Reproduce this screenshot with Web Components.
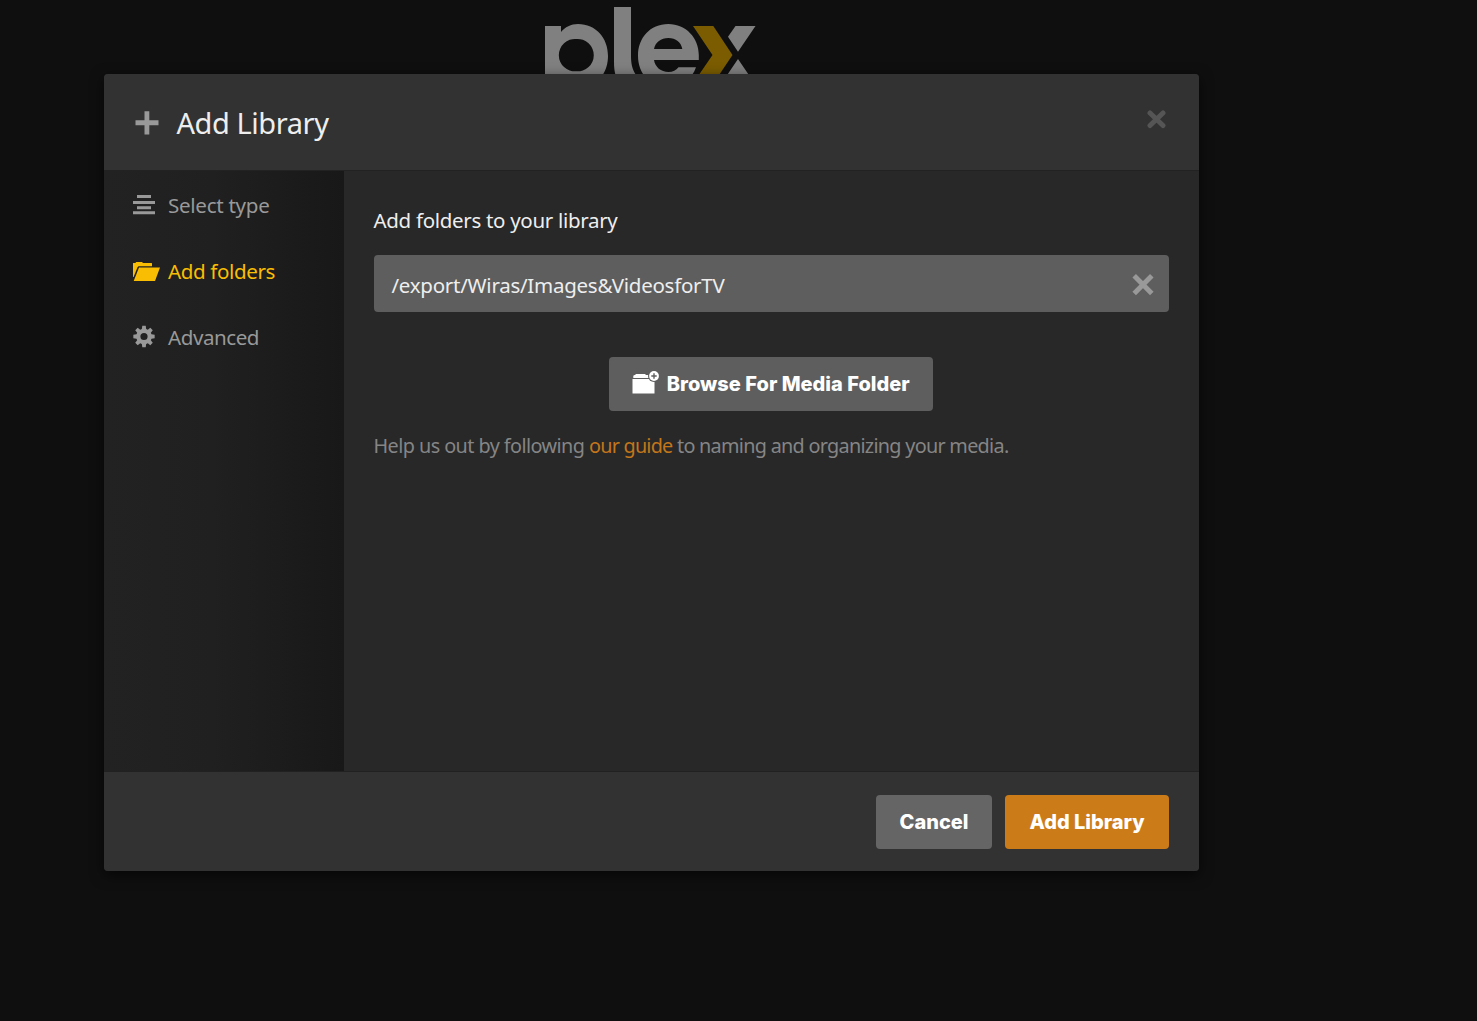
<!DOCTYPE html>
<html lang="en">
<head>
<meta charset="utf-8">
<title>Plex</title>
<style>
html,body{margin:0;height:100%;background:#0f0f0f;overflow:hidden}
body{font-family:"Noto Sans","Open Sans",sans-serif;color:#eee}
</style>
</head>
<body>
<plex-stage>
  <plex-logo slot="brand"></plex-logo>
  <modal-dialog>
    <modal-header slot="header"><fit-text width="152">Add Library</fit-text></modal-header>
    <step-nav slot="nav">
      <step-item icon="list"><fit-text width="101.5">Select type</fit-text></step-item>
      <step-item icon="folder" active><fit-text width="107">Add folders</fit-text></step-item>
      <step-item icon="gear"><fit-text width="91">Advanced</fit-text></step-item>
    </step-nav>
    <folder-panel></folder-panel>
    <plex-button slot="footer" style="width:116px"><fit-text width="69">Cancel</fit-text></plex-button>
    <plex-button slot="footer" primary style="width:164px"><fit-text width="115">Add Library</fit-text></plex-button>
  </modal-dialog>
</plex-stage>
<script>
const define = (name, html, ready) => {
  const t = document.createElement('template');
  t.innerHTML = html;
  customElements.define(name, class extends HTMLElement {
    constructor() {
      super();
      this.attachShadow({mode: 'open'}).append(t.content.cloneNode(true));
    }
    connectedCallback() { if (ready) ready.call(this, this.shadowRoot); }
  });
};

define('plex-stage', `<style>
:host{display:grid;width:1303px;height:1021px;justify-items:center;align-items:start}
.brand,.content{grid-area:1/1}
.brand{margin:7px 3px 0 0}
.content{margin-top:74px;z-index:1}
</style><div class="brand"><slot name="brand"></slot></div><div class="content"><slot></slot></div>`);

define('plex-logo', `<style>:host{display:block}svg{display:block}</style>
<svg width="212" height="80" viewBox="544 7 212 80">
<path fill="#808080" fill-rule="evenodd" d="M545 26H561V32C565 27 571 24 578 24C596 24 608 38 608 56C608 74 596 88 579 88H545ZM576.3 39A16.2 16.2 0 1 0 576.3 71.3A16.2 16.2 0 1 0 576.3 39Z"/>
<path fill="#808080" d="M614 7H631V56C631 63 632 69 636 75V87H622C616 79 614 73 614 62Z"/>
<path fill="#808080" fill-rule="evenodd" d="M668.3 24C686 24 698.8 38 698.8 55V60H654C655 67 661 72 668.5 72C673 72 676 70.5 678.5 67.3H696C692 79 682 87 668 87C650 87 638 74 638 55.5C638 38 650 24 668.3 24ZM654 49H682.3C681 42 676 38 668.3 38C661 38 655.5 42 654 49Z"/>
<path fill="#7b5c00" d="M693 26H713.3L732.5 55L711 87H690.6L712.5 55Z"/>
<path fill="#808080" d="M735.5 26H755.5L738 51.8L728 36.8ZM738 59L757 87H719Z"/>
</svg>`);

/* Tracks its text so the rendered line has the given width. */
define('fit-text', `<style>:host{display:inline-block;white-space:pre}</style><span><slot></slot></span>`, function (root) {
  const span = root.querySelector('span');
  const fit = () => {
    span.style.letterSpacing = '0px';
    const n = this.textContent.length, w = span.getBoundingClientRect().width;
    span.style.letterSpacing = ((+this.getAttribute('width') - w) / n) + 'px';
  };
  requestAnimationFrame(fit);
  document.fonts.ready.then(fit);
});

define('modal-dialog', `<style>
:host{display:flex;flex-direction:column;width:1095px;height:797px;border-radius:4px;overflow:hidden;background:#282828;box-shadow:0 4px 14px rgba(0,0,0,.6)}
.body{display:flex;height:600px}
.main{flex:1;min-width:0}
footer{box-sizing:border-box;height:100px;background:#323232;border-top:1px solid #212121;display:flex;justify-content:flex-end;gap:13px;padding:23px 30px 0;flex:1}
</style><slot name="header"></slot><div class="body"><slot name="nav"></slot><div class="main"><slot></slot></div></div><footer><slot name="footer"></slot></footer>`);

define('modal-header', `<style>
:host{display:flex;box-sizing:border-box;height:97px;background:#323232;border-bottom:1px solid #222;padding:0 32px 0 31px;font-size:29px;line-height:40px;color:#eee}
.plus{margin:37px 17.5px 0 0;flex:none}.title{margin-top:29px;flex:1}.close{margin-top:35px}svg{display:block}
</style><svg class="plus" width="24" height="24"><path fill="#999" d="M9.5.3h4.8v8.9h9.2v5h-9.2v9.3H9.5v-9.3H.5v-5h9z"/></svg>
<div class="title"><slot></slot></div>
<svg class="close" width="21" height="20" viewBox="0 0 21 20"><path stroke="#555" stroke-width="5" stroke-linecap="round" d="M4 4L17 16.5M17 4L4 16.5"/></svg>`);

define('step-nav', `<style>:host{display:block;box-sizing:border-box;width:240px;height:100%;padding-top:1px;background:linear-gradient(90deg,#222 0,#202020 45%,#181818 100%)}</style><slot></slot>`);

const icons = {
  list: '<path d="M4 9h14v3H4zM0 15h22v3H0zM4 20.3h14v2.9H4zM0 25.2h22v3H0z"/>',
  folder: '<path d="M0 25V11.3Q0 11 .5 11H2.3L3.3 10H9L10 11H18.5Q19 11 19 11.5V14.2H5.6L4.6 14.9L.6 25ZM6 15.4H27L22 29H.7Z"/>',
  gear: ''
};
{
  const pts = [];
  for (let i = 0; i < 8; i++) {
    const a = i * Math.PI / 4;
    for (const [d, r] of [[-.28, 7.8], [-.16, 10.8], [.16, 10.8], [.28, 7.8]])
      pts.push((11 + r * Math.sin(a + d)).toFixed(2) + ' ' + (18.5 - r * Math.cos(a + d)).toFixed(2));
  }
  icons.gear = `<path fill-rule="evenodd" d="M${pts.join('L')}ZM11 14.9a3.6 3.6 0 1 0 0 7.2a3.6 3.6 0 1 0 0-7.2Z"/>`;
}

define('step-item', `<style>
:host{display:flex;align-items:center;height:66px;padding-left:29px;font-size:20.6px;line-height:30px;color:#999}
:host([active]){color:#f9be03}
svg{flex:none;width:28px;height:38px;margin-right:7px;fill:currentColor}
</style><svg viewBox="0 0 28 38"></svg><div><slot></slot></div>`, function (root) {
  root.querySelector('svg').innerHTML = icons[this.getAttribute('icon')];
});

define('plex-button', `<style>
:host{display:inline-flex;box-sizing:border-box;align-items:center;justify-content:center;height:54px;border-radius:4px;background:#656565;color:#fff;font:800 20px/28px Inter,sans-serif;white-space:nowrap}
:host([primary]){background:#cc7b19}
</style><slot></slot>`);

define('path-field', `<style>
:host{display:flex;box-sizing:border-box;height:57px;border-radius:4px;background:#5e5e5e;color:#eee;padding:15px 15px 0 17.5px;justify-content:space-between;line-height:30px}
svg{margin-top:4px}
</style><slot></slot><svg width="22" height="22"><path stroke="#999" stroke-width="5" d="M2.2 1.8L19.8 19.4M19.8 1.8L2.2 19.4"/></svg>`);

define('folder-panel', `<style>
:host{display:block;padding:34px 30px 0 29.5px;font-size:20.5px;line-height:30px;color:#eee}
.title{height:50px}
path-field{margin-left:.5px}
.action{display:flex;justify-content:center;margin:45px 1px 20px 0}
.action plex-button{width:324px;background:#5e5e5e}
.action svg{margin:-2px 7px 0 0}
.help{display:flex;font-size:19.8px;color:#858585}
a{color:#c4761a;text-decoration:none}
</style>
<div class="title"><fit-text width="244">Add folders to your library</fit-text></div>
<path-field><fit-text width="333">/export/Wiras/Images&amp;VideosforTV</fit-text></path-field>
<div class="action"><plex-button><svg width="28" height="24" viewBox="0 0 28 24"><g fill="#fff"><path d="M1.3 7V5Q1.5 4 3 4L4 3h9l1 1h4l1 3zM.5 8h22v14.5H.5z"/></g><circle cx="22" cy="5" r="6" fill="#5e5e5e"/><circle cx="22" cy="5" r="4.9" fill="#fff"/><path stroke="#5e5e5e" stroke-width="1.4" d="M22 2.3v5.4M19.3 5h5.4"/></svg><fit-text width="243">Browse For Media Folder</fit-text></plex-button></div>
<div class="help"><fit-text width="215.5">Help us out by following </fit-text><a><fit-text width="83.5">our guide</fit-text></a><fit-text width="336"> to naming and organizing your media.</fit-text></div>`);
</script>
</body>
</html>
